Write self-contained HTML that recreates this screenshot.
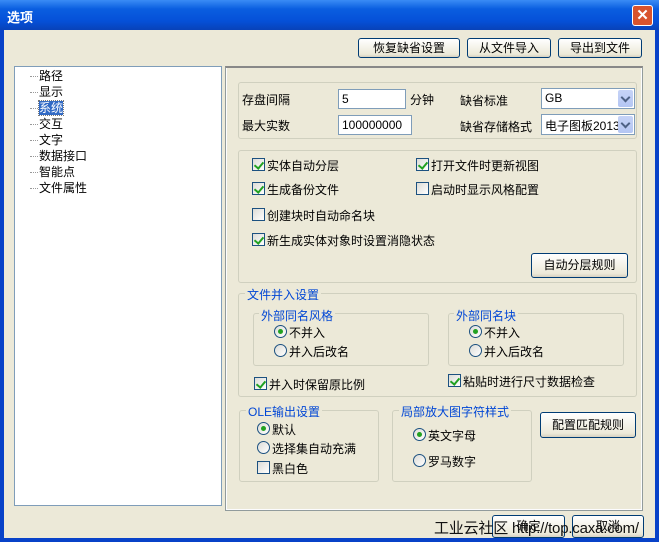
<!DOCTYPE html>
<html><head><meta charset="utf-8"><style>
*{box-sizing:border-box;margin:0;padding:0}
body{width:659px;height:542px;overflow:hidden;background:#ece9d8;font-family:"Liberation Sans","Noto Sans CJK SC",sans-serif;font-size:12px;color:#000;position:relative}
.a{position:absolute;white-space:nowrap}
.title{left:0;top:0;width:659px;height:30px;background:linear-gradient(#3a8cf5,#0a5ee0 30%,#0550d8 70%,#0842b8);color:#fff;font-weight:bold;font-size:13px;padding:7px 0 0 7px}
.frame{border-left:4px solid #0842c8;border-right:4px solid #0842c8;border-bottom:4px solid #0842c8;left:0;top:30px;width:659px;height:512px}
.btn{position:absolute;border:1px solid #003c74;border-radius:3px;background:linear-gradient(#fff,#ece9d8 85%,#d6d0c0);text-align:center;font-size:12px}
.grp{position:absolute;border:1px solid #d0d0bf;border-radius:3px}
.lg{position:absolute;background:#ece9d8;color:#0046d5;padding:0 2px;font-size:12px}
.cb{position:absolute;width:13px;height:13px;border:1px solid #1c5180;background:linear-gradient(135deg,#dcdcd7,#fff)}
.cb.on::after{content:"";position:absolute;left:3px;top:1px;width:4px;height:7px;border:solid #21a121;border-width:0 2px 2px 0;transform:rotate(40deg)}
.rb{position:absolute;width:13px;height:13px;border:1px solid #1c5180;border-radius:50%;background:linear-gradient(135deg,#dcdcd7,#fff)}
.rb.on::after{content:"";position:absolute;left:3px;top:3px;width:5px;height:5px;border-radius:50%;background:#21a121}
.in{position:absolute;border:1px solid #7f9db9;background:#fff;padding:2px 3px;font-size:12px}
.dd{position:absolute;right:1px;top:1px;width:15px;height:17px;background:linear-gradient(#c6d3f7,#b4c6f3);border-radius:2px}
.dd::after{content:"";position:absolute;left:4px;top:4px;width:5px;height:5px;border:solid #4d6185;border-width:0 2px 2px 0;transform:rotate(45deg)}
.tl{position:absolute;left:30px;width:8px;border-top:1px dotted #999}
</style></head><body>
<div class="a title">选项</div>
<div class="a" style="left:632px;top:5px;width:21px;height:21px;background:#d8532d;border:1px solid #fff;border-radius:3px;color:#fff;text-align:center;font-weight:bold;font-size:15px;line-height:19px">✕</div>
<div class="a frame"></div>

<div class="btn" style="left:358px;top:38px;width:102px;height:20px;line-height:18px">恢复缺省设置</div>
<div class="btn" style="left:467px;top:38px;width:84px;height:20px;line-height:18px">从文件导入</div>
<div class="btn" style="left:558px;top:38px;width:84px;height:20px;line-height:18px">导出到文件</div>

<div class="a" style="left:14px;top:66px;width:208px;height:440px;background:#fff;border:1px solid #7f9db9"></div>
<div class="tl" style="top:76px"></div><div class="tl" style="top:92px"></div><div class="tl" style="top:108px"></div><div class="tl" style="top:124px"></div><div class="tl" style="top:140px"></div><div class="tl" style="top:156px"></div><div class="tl" style="top:172px"></div><div class="tl" style="top:188px"></div>
<div class="a" style="left:39px;top:68px;line-height:16px;font-size:12px">路径<br>显示<br><span style="background:#316ac5;color:#fff;outline:1px dotted #777">系统</span><br>交互<br>文字<br>数据接口<br>智能点<br>文件属性</div>

<div class="a" style="left:225px;top:66px;width:418px;height:445px;border:1px solid #919b9c;border-top:2px solid #888;background:#fcfcfe;"></div>
<div class="a" style="left:227px;top:68px;width:414px;height:441px;background:#ece9d8"></div>

<div class="grp" style="left:238px;top:82px;width:399px;height:57px"></div>
<div class="a" style="left:242px;top:91px">存盘间隔</div>
<div class="in" style="left:338px;top:89px;width:68px;height:20px">5</div>
<div class="a" style="left:410px;top:91px">分钟</div>
<div class="a" style="left:460px;top:92px">缺省标准</div>
<div class="in" style="left:541px;top:88px;width:94px;height:21px">GB<div class="dd"></div></div>
<div class="a" style="left:242px;top:117px">最大实数</div>
<div class="in" style="left:338px;top:115px;width:74px;height:20px">100000000</div>
<div class="a" style="left:460px;top:118px">缺省存储格式</div>
<div class="in" style="left:541px;top:114px;width:94px;height:21px;overflow:hidden">电子图板2013<div class="dd"></div></div>

<div class="grp" style="left:238px;top:150px;width:399px;height:133px"></div>
<div class="cb on" style="left:252px;top:158px"></div><div class="a" style="left:267px;top:157px">实体自动分层</div>
<div class="cb on" style="left:416px;top:158px"></div><div class="a" style="left:431px;top:157px">打开文件时更新视图</div>
<div class="cb on" style="left:252px;top:182px"></div><div class="a" style="left:267px;top:181px">生成备份文件</div>
<div class="cb" style="left:416px;top:182px"></div><div class="a" style="left:431px;top:181px">启动时显示风格配置</div>
<div class="cb" style="left:252px;top:208px"></div><div class="a" style="left:267px;top:207px">创建块时自动命名块</div>
<div class="cb on" style="left:252px;top:233px"></div><div class="a" style="left:267px;top:232px">新生成实体对象时设置消隐状态</div>
<div class="btn" style="left:531px;top:253px;width:97px;height:25px;line-height:23px">自动分层规则</div>

<div class="grp" style="left:238px;top:293px;width:399px;height:104px"></div>
<div class="lg" style="left:245px;top:286px">文件并入设置</div>
<div class="grp" style="left:253px;top:313px;width:176px;height:53px"></div>
<div class="lg" style="left:259px;top:307px">外部同名风格</div>
<div class="rb on" style="left:274px;top:325px"></div><div class="a" style="left:289px;top:324px">不并入</div>
<div class="rb" style="left:274px;top:344px"></div><div class="a" style="left:289px;top:343px">并入后改名</div>
<div class="grp" style="left:448px;top:313px;width:176px;height:53px"></div>
<div class="lg" style="left:454px;top:307px">外部同名块</div>
<div class="rb on" style="left:469px;top:325px"></div><div class="a" style="left:484px;top:324px">不并入</div>
<div class="rb" style="left:469px;top:344px"></div><div class="a" style="left:484px;top:343px">并入后改名</div>
<div class="cb on" style="left:254px;top:377px"></div><div class="a" style="left:269px;top:376px">并入时保留原比例</div>
<div class="cb on" style="left:448px;top:374px"></div><div class="a" style="left:463px;top:373px">粘贴时进行尺寸数据检查</div>

<div class="grp" style="left:239px;top:410px;width:140px;height:72px"></div>
<div class="lg" style="left:246px;top:403px">OLE输出设置</div>
<div class="rb on" style="left:257px;top:422px"></div><div class="a" style="left:272px;top:421px">默认</div>
<div class="rb" style="left:257px;top:441px"></div><div class="a" style="left:272px;top:440px">选择集自动充满</div>
<div class="cb" style="left:257px;top:461px"></div><div class="a" style="left:272px;top:460px">黑白色</div>
<div class="grp" style="left:392px;top:410px;width:140px;height:72px"></div>
<div class="lg" style="left:399px;top:403px">局部放大图字符样式</div>
<div class="rb on" style="left:413px;top:428px"></div><div class="a" style="left:428px;top:427px">英文字母</div>
<div class="rb" style="left:413px;top:454px"></div><div class="a" style="left:428px;top:453px">罗马数字</div>
<div class="btn" style="left:540px;top:412px;width:96px;height:26px;line-height:24px">配置匹配规则</div>

<div class="btn" style="left:492px;top:515px;width:73px;height:23px;line-height:21px">确定</div>
<div class="btn" style="left:572px;top:515px;width:72px;height:23px;line-height:21px">取消</div>
<div class="a" style="left:434px;top:517px;font-size:15px;color:#111;letter-spacing:-0.2px">工业云社区 http://top.caxa.com/</div>
</body></html>
